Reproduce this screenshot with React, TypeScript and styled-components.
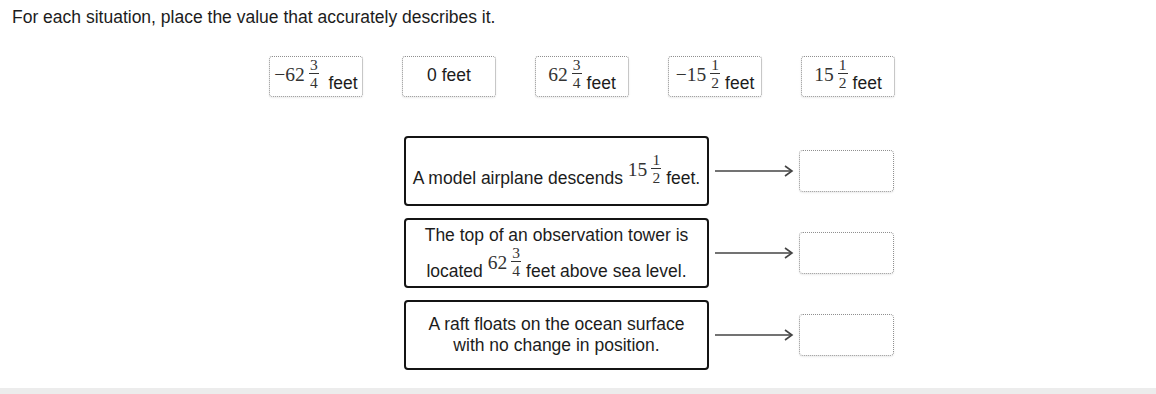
import React from "react";
import styled, { createGlobalStyle } from "styled-components";

const GlobalStyle = createGlobalStyle`
  body {
    margin: 0;
    background: #ffffff;
    font-family: "Liberation Sans", Arial, sans-serif;
    color: #1c1c1c;
  }
`;

interface mixedType {
  sign?: string;
  whole: string;
  num: string;
  den: string;
}

interface rowType {
  id: string;
  content: React.ReactNode;
}

const MixedNumber = ({ sign, whole, num, den }: mixedType) => {
  return (
    <Mixed>
      <Whole>
        {sign}
        {whole}
      </Whole>
      <Fraction>
        <FracPart>{num}</FracPart>
        <FracBar />
        <FracPart>{den}</FracPart>
      </Fraction>
    </Mixed>
  );
};

const Arrow = () => (
  <ArrowSvg width="80" height="12" viewBox="0 0 80 12">
    <line x1="0" y1="6" x2="77" y2="6" stroke="#444" strokeWidth="1.4" />
    <polyline
      points="70,1 77,6 70,11"
      fill="none"
      stroke="#444"
      strokeWidth="1.6"
    />
  </ArrowSvg>
);

const App = () => {
  const rows: rowType[] = [
    {
      id: "plane",
      content: (
        <>
          A model airplane descends{" "}
          <MixedNumber whole="15" num="1" den="2" /> feet.
        </>
      ),
    },
    {
      id: "tower",
      content: (
        <>
          The top of an observation tower is
          <br />
          located <MixedNumber whole="62" num="3" den="4" /> feet above sea
          level.
        </>
      ),
    },
    {
      id: "raft",
      content: (
        <>
          A raft floats on the ocean surface
          <br />
          with no change in position.
        </>
      ),
    },
  ];

  return (
    <Page>
      <GlobalStyle />
      <Title>For each situation, place the value that accurately describes it.</Title>
      <TileRow>
        <Tile>
          <span>
            <MixedNumber sign="−" whole="62" num="3" den="4" />
            &nbsp;&nbsp;feet
          </span>
        </Tile>
        <Tile $plain>
          <span>0 feet</span>
        </Tile>
        <Tile>
          <span>
            <MixedNumber whole="62" num="3" den="4" /> feet
          </span>
        </Tile>
        <Tile>
          <span>
            <MixedNumber sign="−" whole="15" num="1" den="2" /> feet
          </span>
        </Tile>
        <Tile>
          <span>
            <MixedNumber whole="15" num="1" den="2" /> feet
          </span>
        </Tile>
      </TileRow>
      <Rows>
        {rows.map((row: rowType) => {
          return (
            <Row key={row.id}>
              <Statement>
                <span>{row.content}</span>
              </Statement>
              <Arrow />
              <Target />
            </Row>
          );
        })}
      </Rows>
      <Footer />
    </Page>
  );
};

const Page = styled.div`
  width: 1156px;
  height: 394px;
  display: flex;
  flex-direction: column;
  overflow: hidden;
`;

const Title = styled.div`
  font-size: 17.5px;
  line-height: 20px;
  padding: 7px 12px 0;
`;

const TileRow = styled.div`
  display: flex;
  gap: 39px;
  padding-left: 269px;
  margin-top: 29px;
`;

const Tile = styled.div<{ $plain?: boolean }>`
  width: 94px;
  height: 41px;
  box-sizing: border-box;
  border: 1px dotted #8f8f8f;
  border-radius: 3px;
  box-shadow: 0 1px 2px rgba(0, 0, 0, 0.08);
  display: flex;
  align-items: ${(p) => (p.$plain ? "center" : "flex-end")};
  justify-content: center;
  padding-bottom: ${(p) => (p.$plain ? "4px" : "3px")};
  font-size: 17.5px;
  line-height: 20px;
  white-space: nowrap;
`;

const Mixed = styled.span`
  display: inline-flex;
  align-items: center;
  gap: 4px;
  vertical-align: 8px;
  font-family: "Liberation Serif", "Times New Roman", serif;
  color: #333;
`;

const Whole = styled.span`
  font-size: 19.5px;
  line-height: 18px;
`;

const Fraction = styled.span`
  display: inline-flex;
  flex-direction: column;
  align-items: center;
  margin-bottom: 3px;
`;

const FracPart = styled.span`
  font-size: 15.5px;
  line-height: 13px;
`;

const FracBar = styled.span`
  width: 10px;
  height: 1px;
  background: #333;
  margin: 2px 0;
`;

const Rows = styled.div`
  display: flex;
  flex-direction: column;
  gap: 12px;
  padding-left: 404px;
  margin-top: 39px;
`;

const Row = styled.div`
  display: flex;
  align-items: center;
`;

const Statement = styled.div`
  width: 305px;
  height: 70px;
  box-sizing: border-box;
  border: 2px solid #141414;
  border-radius: 4px;
  display: flex;
  align-items: center;
  justify-content: center;
  text-align: center;
  font-size: 17.5px;
  line-height: 21px;
  padding: 0 4px;
  white-space: nowrap;
`;

const ArrowSvg = styled.svg`
  margin: 0 4px 0 6px;
  flex-shrink: 0;
`;

const Target = styled.div`
  width: 95px;
  height: 42px;
  box-sizing: border-box;
  border: 1px dotted #8f8f8f;
  border-radius: 4px;
  box-shadow: 0 1px 2px rgba(0, 0, 0, 0.08);
`;

const Footer = styled.div`
  margin-top: auto;
  height: 6px;
  background: #ececec;
`;

export default App;
